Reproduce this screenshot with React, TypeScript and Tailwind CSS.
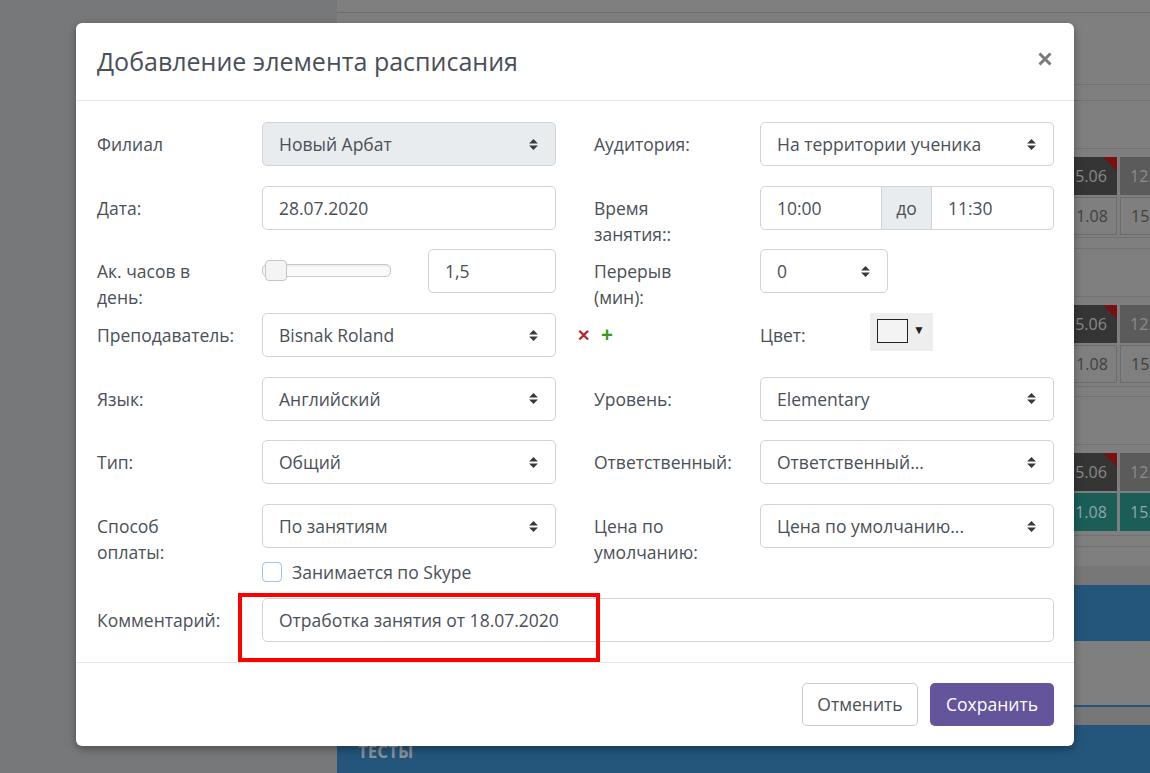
import type { ReactNode } from "react";

const SelectArrows = () => (
    <svg width="9" height="11" viewBox="0 0 4 5" className="shrink-0">
        <path d="M2 0L0 2h4zm0 5L0 3h4z" fill="#343a40" />
    </svg>
);

const Label = ({ children }: { children: ReactNode }) => (
    <div className="pt-[9px] leading-[26px] text-[#495057] whitespace-nowrap">{children}</div>
);

const Field = ({ value, select, disabled, className = "" }: { value: string; select?: boolean; disabled?: boolean; className?: string }) => (
    <div
        className={`h-[44px] flex items-center justify-between border border-[#ced4da] rounded-[5px] pl-[16px] pr-[17px] ${
            disabled ? "bg-[#e9ecef]" : "bg-white"
        } ${className}`}
    >
        <span className="truncate">{value}</span>
        {select && <SelectArrows />}
    </div>
);

// schedule cells peeking out behind the dialog
const Cell = ({ text, kind, flag }: { text: string; kind: "dark" | "gray" | "line" | "teal"; flag?: boolean }) => {
    const styles = {
        dark: "bg-[#353535] text-[#8a8a8a]",
        gray: "bg-[#5b5b5b] text-[#8c8c8c]",
        line: "border border-[#6c6c6c] text-[#404040]",
        teal: "bg-[#1b5e57] text-[#8fa7a4]",
    };
    return (
        <div className={`relative w-[61px] h-[38px] shrink-0 flex items-center pl-[10px] text-[16px] overflow-hidden ${styles[kind]}`}>
            {text}
            {flag && (
                <div className="absolute top-0 right-0 w-0 h-0 border-t-[14px] border-l-[14px] border-t-[#7a0f0f] border-l-transparent" />
            )}
        </div>
    );
};

const CellGroup = ({ bottom }: { bottom: "line" | "teal" }) => (
    <div className="flex flex-col gap-[2px] pt-[8px] pl-[719px]">
        <div className="flex gap-[3px]">
            <Cell text="15.06" kind="dark" flag />
            <Cell text="12." kind="gray" />
        </div>
        <div className="flex gap-[3px]">
            <Cell text="11.08" kind={bottom} />
            <Cell text="15." kind={bottom} />
        </div>
    </div>
);

const Backdrop = () => (
    <div className="flex h-full">
        <div className="w-[337px] h-full bg-[#77787a]" />
        <div className="flex-1 h-full bg-[#7f7f7f] flex flex-col overflow-hidden">
            <div className="h-[13px] border-b border-[#6e6e6e] shrink-0" />
            <div className="h-[72px] border-b border-[#727272] shrink-0" />
            <div className="h-[16px] border-b border-[#727272] shrink-0" />
            <div className="h-[48px] border-b border-[#727272] shrink-0" />
            <div className="h-[89px] border-b border-[#727272] shrink-0">
                <CellGroup bottom="line" />
            </div>
            <div className="h-[11px] border-b border-[#727272] shrink-0" />
            <div className="h-[48px] border-b border-[#727272] shrink-0" />
            <div className="h-[90px] border-b border-[#727272] shrink-0">
                <CellGroup bottom="line" />
            </div>
            <div className="h-[10px] border-b border-[#727272] shrink-0" />
            <div className="h-[48px] border-b border-[#727272] shrink-0" />
            <div className="h-[91px] border-b border-[#727272] shrink-0">
                <CellGroup bottom="teal" />
            </div>
            <div className="h-[11px] border-b border-[#727272] shrink-0" />
            <div className="h-[19px] shrink-0" />
            <div className="h-[19px] bg-[#777777] shrink-0" />
            <div className="h-[56px] bg-[#24557a] shrink-0" />
            <div className="h-[66px] border-b-2 border-[#24557a] shrink-0" />
            <div className="h-[18px] bg-[#777777] shrink-0" />
            <div className="flex-1 bg-[#24557a] pl-[21px] pt-[14px] text-[17px] font-bold text-[#8a929a]">ТЕСТЫ</div>
        </div>
    </div>
);

const Row = ({ children }: { children: ReactNode }) => (
    <div className="grid grid-cols-[165px_294px_38px_166px_294px] grid-rows-[44px] h-[44px]">{children}</div>
);

export default function App() {
    return (
        <div
            className="relative w-[1150px] h-[773px] overflow-hidden text-[17.5px] text-[#495057]"
            style={{ fontFamily: '"Open Sans", "Noto Sans", sans-serif' }}
        >
            <Backdrop />

            <div className="absolute left-[76px] top-[23px] w-[998px] bg-white rounded-[6px] shadow-[0_3px_9px_rgba(0,0,0,0.35)]">
                <div className="h-[78px] border-b border-[#e5e7eb] flex items-center justify-between pl-[21px] pr-[22px]">
                    <h2 className="text-[25px] text-[#495057] leading-none">Добавление элемента расписания</h2>
                    <svg width="14" height="14" viewBox="0 0 14 14" className="mb-[6px]">
                        <path d="M1.5 1.5L12.5 12.5M12.5 1.5L1.5 12.5" stroke="#7a7a7a" strokeWidth="3" />
                    </svg>
                </div>

                <div className="pt-[21px] pb-[20px] pl-[21px] pr-[20px] flex flex-col gap-[19.7px]">
                    <Row>
                        <Label>Филиал</Label>
                        <Field value="Новый Арбат" select disabled />
                        <div />
                        <Label>Аудитория:</Label>
                        <Field value="На территории ученика" select />
                    </Row>
                    <Row>
                        <Label>Дата:</Label>
                        <Field value="28.07.2020" />
                        <div />
                        <Label>
                            Время
                            <br />
                            занятия::
                        </Label>
                        <div className="flex h-[44px]">
                            <div className="w-[122px] border border-[#ced4da] rounded-l-[5px] flex items-center pl-[16px]">10:00</div>
                            <div className="w-[49px] border-y border-[#ced4da] bg-[#e9ecef] flex items-center justify-center">до</div>
                            <div className="flex-1 border border-[#ced4da] rounded-r-[5px] flex items-center pl-[16px]">11:30</div>
                        </div>
                    </Row>
                    <Row>
                        <Label>
                            Ак. часов в
                            <br />
                            день:
                        </Label>
                        <div className="flex items-center justify-between h-[44px]">
                            <div className="relative w-[129px] h-[13px] -mt-[2px] rounded-[5px] border border-[#c8c8c8] bg-[#fafafa] shadow-[inset_0_1px_2px_rgba(0,0,0,0.08)]">
                                <div className="absolute left-[2px] top-[-5px] w-[22px] h-[21px] rounded-[4px] border border-[#c5c5c5] bg-[#f4f4f4]" />
                            </div>
                            <Field value="1,5" className="w-[128px]" />
                        </div>
                        <div />
                        <Label>
                            Перерыв
                            <br />
                            (мин):
                        </Label>
                        <div>
                            <Field value="0" select className="w-[128px]" />
                        </div>
                    </Row>
                    <Row>
                        <Label>Преподаватель:</Label>
                        <Field value="Bisnak Roland" select />
                        <div className="flex items-center gap-[11px] pl-[21px] font-bold whitespace-nowrap">
                            <span className="text-[#b52a2a] text-[16px]">✕</span>
                            <span className="text-[#3d9a17] text-[21px]">+</span>
                        </div>
                        <div />
                        <div className="flex items-start">
                            <div className="w-[110px]">
                                <Label>Цвет:</Label>
                            </div>
                            <div className="h-[38px] w-[63px] bg-[#eeeeee] flex items-start pt-[6px] pl-[7px] gap-[5px]">
                                <div className="w-[31px] h-[24px] border border-[#222] bg-[#f3f3f3]" />
                                <span className="text-[12px] leading-[22px] text-[#222]">▼</span>
                            </div>
                        </div>
                    </Row>
                    <Row>
                        <Label>Язык:</Label>
                        <Field value="Английский" select />
                        <div />
                        <Label>Уровень:</Label>
                        <Field value="Elementary" select />
                    </Row>
                    <Row>
                        <Label>Тип:</Label>
                        <Field value="Общий" select />
                        <div />
                        <Label>Ответственный:</Label>
                        <Field value="Ответственный..." select />
                    </Row>
                    <div>
                        <Row>
                            <Label>
                                Способ
                                <br />
                                оплаты:
                            </Label>
                            <Field value="По занятиям" select />
                            <div />
                            <Label>
                                Цена по
                                <br />
                                умолчанию:
                            </Label>
                            <Field value="Цена по умолчанию..." select />
                        </Row>
                        <div className="flex items-center pl-[165px] mt-[14px] -mb-[4px] h-[20px]">
                            <div className="w-[20px] h-[20px] rounded-[4px] border border-[#9cc2f5] bg-white" />
                            <span className="ml-[10px]">Занимается по Skype</span>
                        </div>
                    </div>
                    <div className="grid grid-cols-[165px_1fr] grid-rows-[44px] h-[44px]">
                        <Label>Комментарий:</Label>
                        <Field value="Отработка занятия от 18.07.2020" />
                    </div>
                </div>

                <div className="border-t border-[#e5e7eb] pt-[20px] pb-[20px] pr-[20px] flex justify-end gap-[12px]">
                    <button className="h-[43px] w-[116px] border border-[#cccccc] rounded-[5px] bg-white text-[#495057]">Отменить</button>
                    <button className="h-[43px] w-[124px] rounded-[5px] bg-[#63549b] text-white">Сохранить</button>
                </div>
            </div>

            <div className="absolute left-[238px] top-[593px] w-[362px] h-[69px] border-[4px] border-[#ff0000]" />
        </div>
    );
}
